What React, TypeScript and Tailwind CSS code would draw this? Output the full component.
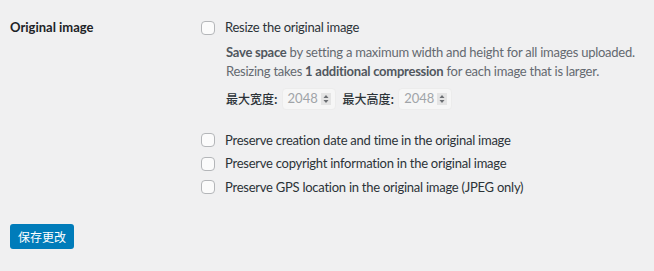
import React from "react";

const Box = () => (
  <span className="block w-[14px] h-[14px] shrink-0 rounded-[4px] border border-[#b4b6b9] bg-[#fbfbfb]" />
);

const Num = () => (
  <span className="flex items-center h-[22px] w-[54px] rounded-[4px] bg-[#f6f6f6] border border-[#ececec] pl-[5px] pr-[4px] text-[#a0a4a8]">
    <span className="leading-none">2048</span>
    <span className="ml-[3px] flex flex-col items-center justify-center w-[10px] h-[12px] bg-[#e4e4e4]">
      <svg width="6" height="10" viewBox="0 0 6 10">
        <path d="M3 1 L5.5 4 L0.5 4 Z" fill="#6b6e72" />
        <path d="M3 9 L5.5 6 L0.5 6 Z" fill="#6b6e72" />
      </svg>
    </span>
  </span>
);

const Row = ({ children }: { children: React.ReactNode }) => (
  <div className="flex items-center h-[23.5px]">
    <Box />
    <span className="ml-[10px] text-[#2c3338] whitespace-nowrap">{children}</span>
  </div>
);

const cjk = { fontFamily: '"Noto Sans CJK SC", sans-serif' };

export default function App() {
  return (
    <div
      className="w-[654px] h-[271px] bg-[#f0f0f1] text-[13px] tracking-[-0.25px] text-[#1d2327] overflow-hidden"
      style={{ fontFamily: 'Lato, "Noto Sans CJK SC", sans-serif' }}
    >
      <div className="flex">
        <div className="w-[201px] shrink-0 pl-[10px] pt-[17px] font-bold text-[13px] leading-[20px] tracking-[0px]">
          Original image
        </div>
        <div className="flex flex-col pt-[16px] whitespace-nowrap">
          <Row>Resize the original image</Row>
          <div className="pl-[25px] mt-[3px] text-[#646970] leading-[19px]">
            <div>
              <span className="font-bold text-[#50575e]">Save space</span> by setting a maximum width and height for all images uploaded.
            </div>
            <div>
              Resizing takes <span className="font-bold text-[#50575e]">1 additional compression</span> for each image that is larger.
            </div>
          </div>
          <div className="pl-[25px] mt-[7px] flex items-center h-[22px] text-[#2c3338] tracking-[0px]">
            <span className="text-[12px] font-medium" style={cjk}>最大宽度:</span>
            <span className="ml-[4px]"><Num /></span>
            <span className="ml-[7px] text-[12px] font-medium" style={cjk}>最大高度:</span>
            <span className="ml-[4px]"><Num /></span>
          </div>
          <div className="mt-[19px] flex flex-col">
            <Row>Preserve creation date and time in the original image</Row>
            <Row>Preserve copyright information in the original image</Row>
            <Row>Preserve GPS location in the original image (JPEG only)</Row>
          </div>
        </div>
      </div>
      <div className="pl-[10px] mt-[25px]">
        <button
          className="h-[25px] w-[64px] rounded-[3px] bg-[#007cba] text-white text-[12px] leading-none tracking-[0px]"
          style={cjk}
        >
          保存更改
        </button>
      </div>
    </div>
  );
}
